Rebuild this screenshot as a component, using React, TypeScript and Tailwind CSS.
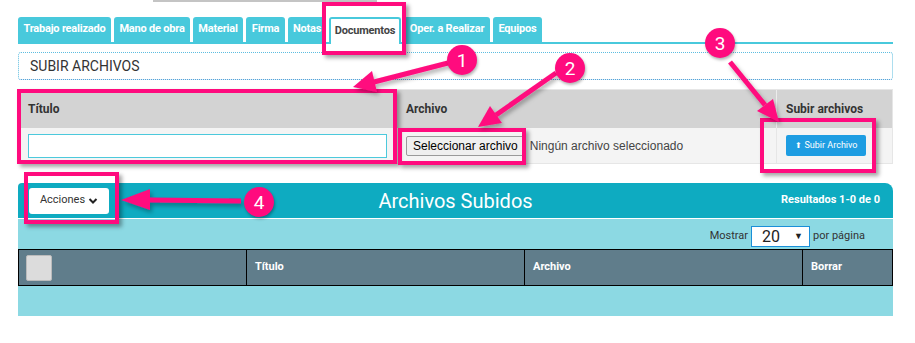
import React from "react";

const PINK = "#ff0b7e";

const TABS = [
  { label: "Trabajo realizado", w: "w-[93px]" },
  { label: "Mano de obra", w: "w-[76px]" },
  { label: "Material", w: "w-[50px]" },
  { label: "Firma", w: "w-[39px]" },
  { label: "Notas", w: "w-[38px]" },
  { label: "Documentos", w: "w-[72px]", active: true },
  { label: "Oper. a Realizar", w: "w-[86px]" },
  { label: "Equipos", w: "w-[49px]" },
];

function Badge({ n, className }: { n: number; className: string }) {
  return (
    <div
      className={`absolute w-[30px] h-[30px] rounded-full bg-[#ff0b7e] text-white flex items-center justify-center text-[19px] leading-none shadow-[1px_2px_3px_rgba(0,0,0,0.3)] ${className}`}
    >
      {n}
    </div>
  );
}

function Arrows() {
  return (
    <svg className="absolute inset-0 pointer-events-none" width={915} height={343}>
      <defs>
        <filter id="sh" x="-20%" y="-20%" width="140%" height="140%">
          <feDropShadow dx="2" dy="3" stdDeviation="2" floodColor="#000" floodOpacity="0.3" />
        </filter>
      </defs>
      <g filter="url(#sh)" fill={PINK} stroke={PINK}>
        {/* 1 */}
        <line x1={448} y1={63} x2={374} y2={82} strokeWidth={5} />
        <polygon points="353,87 377,92 372,71" stroke="none" />
        {/* 2 */}
        <line x1={556} y1={73} x2={496} y2={115} strokeWidth={5} />
        <polygon points="478,127 502,123 490,106" stroke="none" />
        {/* 3 */}
        <line x1={730} y1={62} x2={765} y2={105} strokeWidth={5} />
        <polygon points="779,122 757,111 773,99" stroke="none" />
        {/* 4 */}
        <line x1={241} y1={201} x2={148} y2={200} strokeWidth={5} />
        <polygon points="121,200 150,189 150,210" stroke="none" />
      </g>
    </svg>
  );
}

export default function App() {
  return (
    <div className="relative w-[915px] h-[343px] bg-white overflow-hidden font-['Roboto','Liberation_Sans',sans-serif]">
      {/* leftover line above */}
      <div className="ml-[153px] w-[224px] h-[2px] bg-[#c4c4c4]" />

      {/* Tabs */}
      <div className="mt-[15px] ml-[18px] w-[875px] flex gap-[3px] border-b-2 border-[#48c9dc]">
        {TABS.map((t) => (
          <div
            key={t.label}
            className={`${t.w} h-[25px] flex items-center justify-center rounded-t-[3px] text-[11px] font-bold tracking-[-0.2px] ${
              t.active
                ? "bg-white text-[#444] border-2 border-b-0 border-[#48c9dc] -mb-[2px] h-[27px]"
                : "bg-[#48c9dc] text-white"
            }`}
          >
            {t.label}
          </div>
        ))}
      </div>

      {/* Subir archivos panel */}
      <div className="mt-[8px] ml-[18px] w-[875px] h-[28px] border border-dotted border-[#5cbde0] border-b-[#2f8fd0] rounded-[3px] flex items-center px-[11px] text-[14px] text-[#333]">
        SUBIR ARCHIVOS
      </div>

      {/* Upload table */}
      <div className="mt-[9px] ml-[18px] w-[875px] border border-[#e6e6e6] grid grid-cols-[378px_380px_1fr]">
        <div className="h-[38px] bg-[#d3d3d3] flex items-center px-[9px] text-[12px] font-bold text-[#333] border-r border-[#ececec]">
          Título
        </div>
        <div className="h-[38px] bg-[#d3d3d3] flex items-center px-[9px] text-[12px] font-bold text-[#333] border-r border-[#ececec]">
          Archivo
        </div>
        <div className="h-[38px] bg-[#d3d3d3] flex items-center px-[9px] text-[12px] font-bold text-[#333]">
          Subir archivos
        </div>
        <div className="h-[35px] bg-[#f4f4f4] flex items-center px-[9px] border-r border-[#e6e6e6]">
          <div className="w-full h-[24px] bg-white border border-[#4cc9dc]" />
        </div>
        <div className="h-[35px] bg-[#f4f4f4] flex items-center pl-[9px] gap-[5px] border-r border-[#e6e6e6] font-['Liberation_Sans',Arial,sans-serif] text-[12px]">
          <div className="h-[20px] px-[6px] flex items-center bg-[#efefef] border border-[#9a9a9a] rounded-[2px] text-black">
            Seleccionar archivo
          </div>
          <span className="text-[#444]">Ningún archivo seleccionado</span>
        </div>
        <div className="h-[35px] bg-[#f4f4f4] flex items-center pl-[9px]">
          <div className="h-[21px] w-[80px] bg-[#1e9de2] rounded-[2px] text-white text-[9px] flex items-center justify-center gap-[3px]">
            <span className="text-[8px]">⬆</span>
            Subir Archivo
          </div>
        </div>
      </div>

      {/* Archivos subidos */}
      <div className="mt-[19px] ml-[18px] w-[875px]">
        <div className="h-[35px] bg-[#0eabc1] rounded-tl-[4px] rounded-tr-[8px] flex items-center px-[11px] relative">
          <div className="w-[80px] h-[26px] bg-white rounded-[3px] flex items-center justify-center gap-[3px] text-[11px] text-[#333]">
            Acciones
            <svg width="10" height="8" viewBox="0 0 10 8">
              <path d="M1.5 2 L5 5.5 L8.5 2" fill="none" stroke="#222" strokeWidth="2" />
            </svg>
          </div>
          <div className="absolute left-0 right-0 text-center text-[20px] text-white pointer-events-none">
            Archivos Subidos
          </div>
          <div className="ml-auto pr-[2px] text-[11px] font-bold text-white">Resultados 1-0 de 0</div>
        </div>
        <div className="mt-[1px] bg-[#8cd9e3] pt-[7px] h-[97px]">
          <div className="flex items-center justify-end pr-[28px] gap-[3px] text-[11px] text-[#333]">
            <span>Mostrar</span>
            <div className="w-[59px] h-[21px] bg-white border border-[#1a8fd8] flex items-center justify-between pl-[10px] pr-[6px]">
              <span className="text-[16px] leading-none text-[#222]">20</span>
              <span className="text-[9px] text-[#222]">▼</span>
            </div>
            <span>por página</span>
          </div>
          <div className="mt-[2px] grid grid-cols-[228px_278px_278px_1fr] h-[37px] bg-[#607d8b] border border-black text-white text-[11px] font-bold">
            <div className="flex items-center px-[7px] border-r border-black">
              <div className="w-[26px] h-[26px] bg-[#dcdcdc] border border-[#bbb] rounded-[2px]" />
            </div>
            <div className="flex items-center px-[8px] border-r border-black">Título</div>
            <div className="flex items-center px-[8px] border-r border-black">Archivo</div>
            <div className="flex items-center px-[8px]">Borrar</div>
          </div>
        </div>
      </div>

      {/* Annotation boxes */}
      <div className="absolute left-[322px] top-[2px] w-[84px] h-[53px] border-[4px] border-[#ff0b7e] shadow-[3px_3px_4px_rgba(0,0,0,0.35)]" />
      <div className="absolute left-[17px] top-[89px] w-[380px] h-[75px] border-[4px] border-[#ff0b7e] shadow-[3px_3px_4px_rgba(0,0,0,0.35)]" />
      <div className="absolute left-[398px] top-[128px] w-[128px] h-[37px] border-[4px] border-[#ff0b7e] shadow-[3px_3px_4px_rgba(0,0,0,0.35)]" />
      <div className="absolute left-[760px] top-[118px] w-[116px] h-[55px] border-[4px] border-[#ff0b7e] shadow-[3px_3px_4px_rgba(0,0,0,0.35)]" />
      <div className="absolute left-[24px] top-[172px] w-[95px] h-[52px] border-[4px] border-[#ff0b7e] shadow-[3px_3px_4px_rgba(0,0,0,0.35)]" />

      <Arrows />

      <Badge n={1} className="left-[447px] top-[45px]" />
      <Badge n={2} className="left-[555px] top-[53px]" />
      <Badge n={3} className="left-[705px] top-[28px]" />
      <Badge n={4} className="left-[244px] top-[187px]" />
    </div>
  );
}
